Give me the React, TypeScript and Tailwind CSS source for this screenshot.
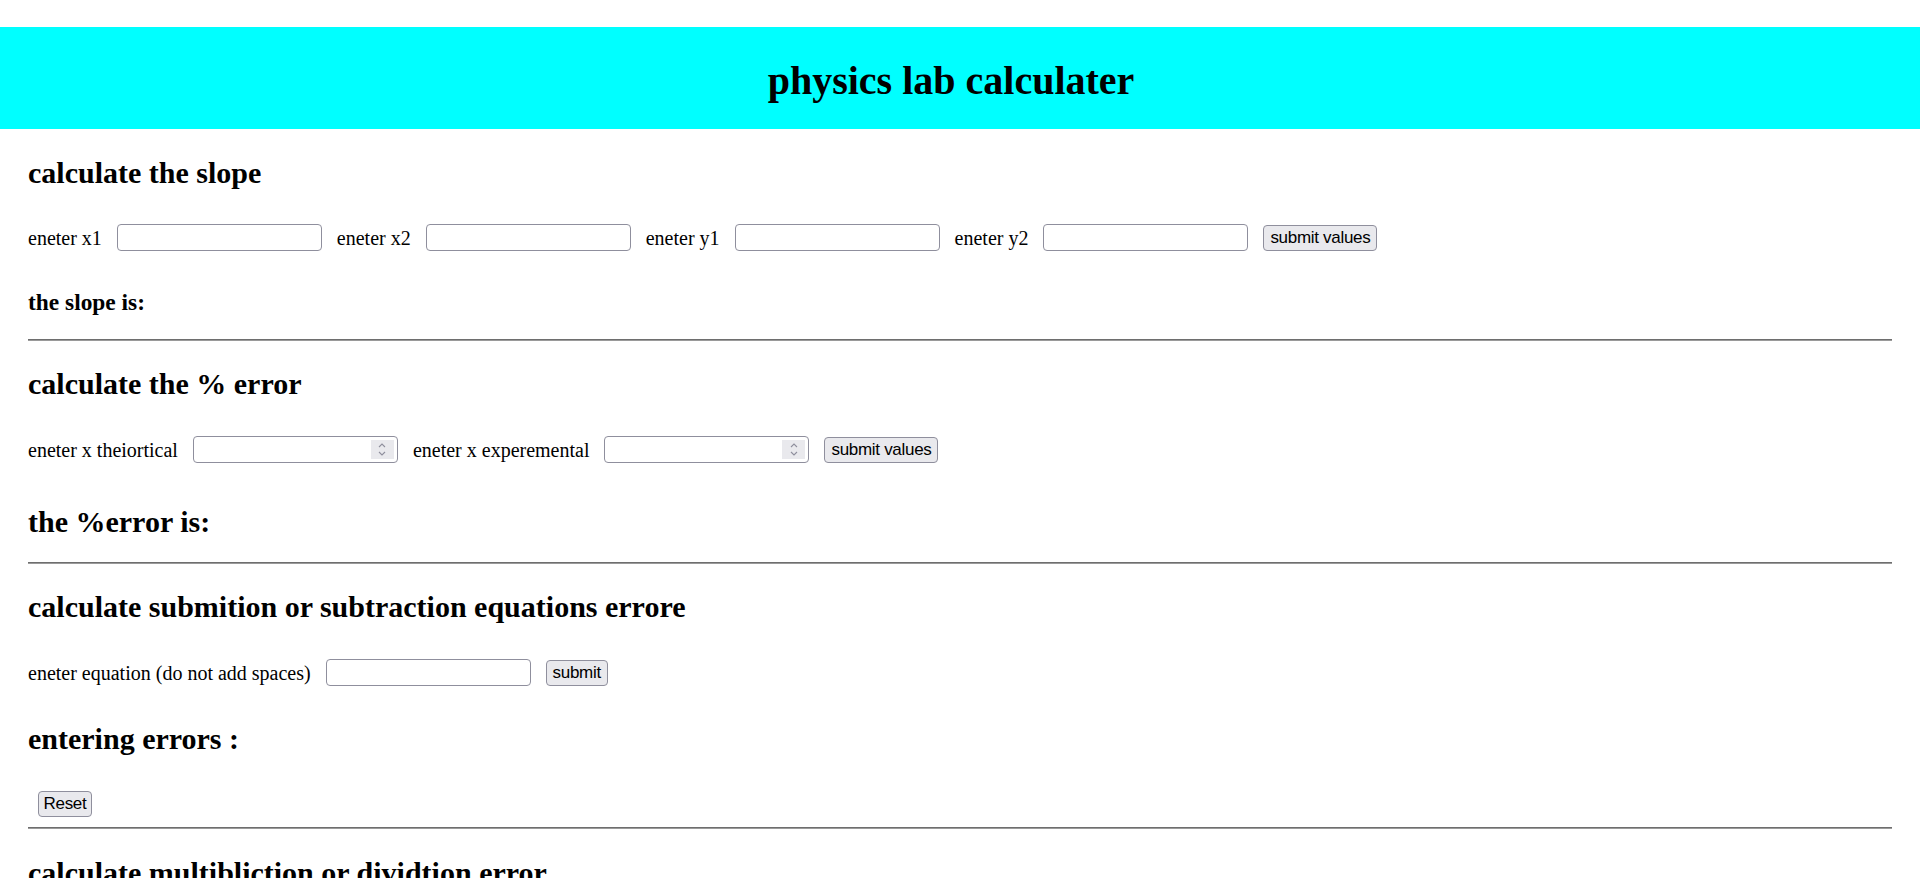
import React from "react";

function TextBox({ number = false }: { number?: boolean }) {
  return (
    <div className="flex h-[27px] w-[205px] items-center rounded-[4px] border border-[#8f8f9d] bg-white pr-[3px]">
      <input
        type="text"
        className="h-full min-w-0 flex-1 bg-transparent px-[4px] font-['Liberation_Sans',sans-serif] text-[16px] outline-none"
      />
      {number && (
        <div className="flex h-[19px] w-[23px] items-center justify-center bg-[#e9e9ed]">
          <svg width="10" height="15" viewBox="0 0 10 15" fill="none" stroke="#8f8f9d" strokeWidth="1.1">
            <polyline points="2,5 5,2 8,5" />
            <polyline points="2,10 5,13 8,10" />
          </svg>
        </div>
      )}
    </div>
  );
}

function Btn({ children, w }: { children: React.ReactNode; w: string }) {
  return (
    <button
      className={`${w} h-[26px] rounded-[4px] border border-[#8f8f9d] bg-[#e9e9ed] text-center font-['Liberation_Sans',sans-serif] text-[17px] leading-[24px] tracking-[-0.3px] text-black`}
    >
      {children}
    </button>
  );
}

function Rule() {
  return <div className="h-[2px] border-t border-b border-t-[#6e6e6e] border-b-[#9a9a9a]" />;
}

export default function App() {
  return (
    <div className="min-h-screen bg-white pt-[27px] font-['Liberation_Serif','Times_New_Roman',serif] text-black">
      {/* header band */}
      <div className="h-[102px] bg-[#00ffff] pt-[30px] pr-[18px] text-center">
        <h1 className="text-[40px] font-bold leading-[48px]">physics lab calculater</h1>
      </div>

      <div className="px-[28px] pt-[26px]">
        {/* slope */}
        <h2 className="text-[30px] font-bold leading-[36px]">calculate the slope</h2>
        <div className="mt-[33px] flex h-[27px] items-center gap-[15px] text-[20px]">
          <span>eneter x1</span>
          <TextBox />
          <span>eneter x2</span>
          <TextBox />
          <span>eneter y1</span>
          <TextBox />
          <span>eneter y2</span>
          <TextBox />
          <Btn w="w-[114px]">submit values</Btn>
        </div>
        <h3 className="mt-[37px] text-[23.4px] font-bold leading-[28px]">the slope is:</h3>
        <div className="mt-[23px]">
          <Rule />
        </div>

        {/* % error */}
        <h2 className="mt-[25px] text-[30px] font-bold leading-[36px]">calculate the % error</h2>
        <div className="mt-[34px] flex h-[27px] items-center gap-[15px] text-[20px]">
          <span>eneter x theiortical</span>
          <TextBox number />
          <span>eneter x experemental</span>
          <TextBox number />
          <Btn w="w-[114px]">submit values</Btn>
        </div>
        <h2 className="mt-[41px] text-[30px] font-bold leading-[36px]">the %error is:</h2>
        <div className="mt-[22px]">
          <Rule />
        </div>

        {/* add / subtract */}
        <h2 className="mt-[25px] text-[30px] font-bold leading-[36px]">
          calculate submition or subtraction equations errore
        </h2>
        <div className="mt-[34px] flex h-[27px] items-center gap-[15px] text-[20px]">
          <span>eneter equation (do not add spaces)</span>
          <TextBox />
          <Btn w="w-[62px]">submit</Btn>
        </div>
        <h2 className="mt-[35px] text-[30px] font-bold leading-[36px]">entering errors :</h2>
        <div className="mt-[34px] flex h-[26px] items-center pl-[10px]">
          <Btn w="w-[54px]">Reset</Btn>
        </div>
        <div className="mt-[10px]">
          <Rule />
        </div>

        {/* multiply / divide */}
        <h2 className="mt-[26px] text-[30px] font-bold leading-[36px]">
          calculate multibliction or dividtion error
        </h2>
        <div className="h-[200px]" />
      </div>
    </div>
  );
}
